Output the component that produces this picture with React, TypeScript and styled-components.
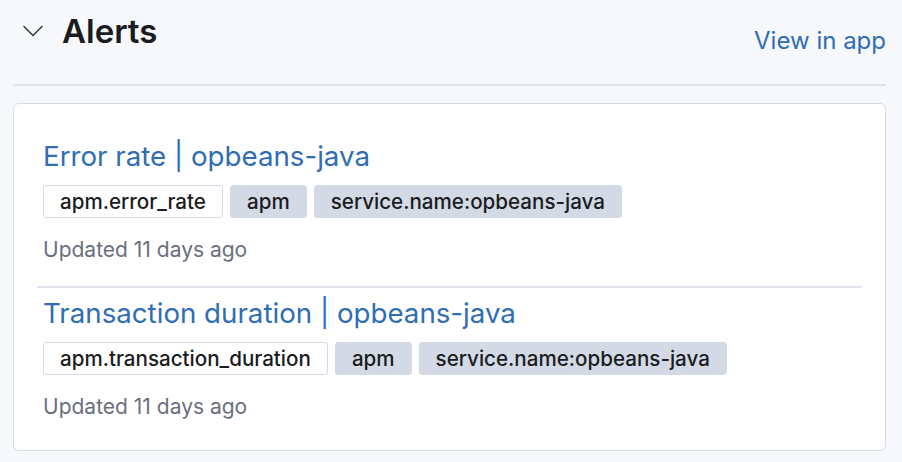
import React from "react";
import styled, { createGlobalStyle } from "styled-components";

const GlobalStyle = createGlobalStyle`
  html, body {
    margin: 0;
    padding: 0;
    background: #f7f8fc;
    font-family: Inter, "Noto Sans", sans-serif;
  }
`;

const Page = styled.div`
  padding: 0 16px 0 13px;
  width: 902px;
  box-sizing: border-box;
`;

const Header = styled.div`
  display: flex;
  justify-content: space-between;
  align-items: flex-start;
  padding-top: 11px;
  padding-bottom: 27px;
  border-bottom: 2px solid #dfe3ec;
`;

const TitleGroup = styled.div`
  display: flex;
  align-items: center;
  gap: 19px;
  padding-left: 10px;
`;

const Chevron = styled.svg`
  width: 20px;
  height: 12px;
  display: block;
`;

const Title = styled.h2`
  margin: 0;
  font-size: 33px;
  line-height: 40px;
  font-weight: 600;
  color: #1a1c21;
`;

const HeaderLink = styled.a`
  margin-top: 14px;
  font-size: 24px;
  line-height: 32px;
  color: #2f6db5;
  text-decoration: none;
`;

const Panel = styled.div`
  margin-top: 17px;
  background: #ffffff;
  border: 1.5px solid #d6dce8;
  border-radius: 6px;
  padding: 27px 23px 7px 23px;
`;

const Item = styled.div`
  display: flex;
  flex-direction: column;
  align-items: flex-start;
  padding: 9px 6px 22px;
`;

const Divider = styled.div`
  height: 2px;
  background: #dfe3ec;
`;

const ItemTitle = styled.a`
  font-size: 27.7px;
  line-height: 32px;
  color: #2f6db5;
  text-decoration: none;
`;

const Tags = styled.div`
  display: flex;
  gap: 7px;
  margin-top: 13px;
`;

const Tag = styled.span<{ $hollow?: boolean }>`
  display: inline-flex;
  align-items: center;
  height: 33px;
  box-sizing: border-box;
  padding: 0 16px;
  border-radius: 3px;
  font-size: 20.6px;
  font-weight: 500;
  color: #1a1c21;
  background: ${(p) => (p.$hollow ? "#ffffff" : "#d3dae6")};
  border: 1.5px solid #d3dae6;
  white-space: nowrap;
`;

const Updated = styled.div`
  margin-top: 18px;
  font-size: 21px;
  line-height: 28px;
  color: #69707d;
`;

type Alert = { title: string; rule: string; tags: string[] };

const alerts: Alert[] = [
  {
    title: "Error rate | opbeans-java",
    rule: "apm.error_rate",
    tags: ["apm", "service.name:opbeans-java"],
  },
  {
    title: "Transaction duration | opbeans-java",
    rule: "apm.transaction_duration",
    tags: ["apm", "service.name:opbeans-java"],
  },
];

export default function App() {
  return (
    <>
      <GlobalStyle />
      <Page>
        <Header>
          <TitleGroup>
            <Chevron viewBox="0 0 20 12" fill="none">
              <path
                d="M1 1.5 L10 10.5 L19 1.5"
                stroke="#343741"
                strokeWidth="1.5"
                strokeLinecap="round"
                strokeLinejoin="round"
              />
            </Chevron>
            <Title>Alerts</Title>
          </TitleGroup>
          <HeaderLink href="#">View in app</HeaderLink>
        </Header>
        <Panel>
          {alerts.map((a, i) => (
            <React.Fragment key={a.title}>
              {i > 0 && <Divider />}
              <Item>
                <ItemTitle href="#">{a.title}</ItemTitle>
                <Tags>
                  <Tag $hollow>{a.rule}</Tag>
                  {a.tags.map((t) => (
                    <Tag key={t}>{t}</Tag>
                  ))}
                </Tags>
                <Updated>Updated 11 days ago</Updated>
              </Item>
            </React.Fragment>
          ))}
        </Panel>
      </Page>
    </>
  );
}
